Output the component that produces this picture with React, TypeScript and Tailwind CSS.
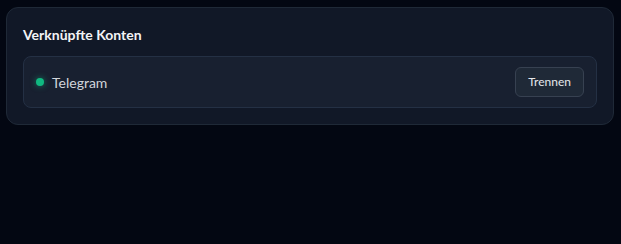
export default function App() {
  return (
    <div className="min-h-screen w-full bg-[#030712] pl-[6px] pr-[7px] pt-[7px]" style={{ fontFamily: 'Lato, "Noto Sans", sans-serif' }}>
      <div className="rounded-xl border border-[#1f2937] bg-[#111827] px-4 pt-[17px] pb-4">
        <h3 className="text-[14px] font-bold leading-5 text-[#f3f4f6]">Verknüpfte Konten</h3>
        <div className="mt-[11px] flex items-center justify-between rounded-lg border border-[#243044] bg-[#182030] pl-3 pr-3 py-[10px]">
          <div className="flex items-center gap-2">
            <span className="h-2 w-2 rounded-full bg-[#10b981] shadow-[0_0_6px_rgba(16,185,129,0.6)]" />
            <span className="text-[14px] text-[#d1d5db]">Telegram</span>
          </div>
          <button className="h-[30px] rounded-md border border-[#374151] bg-[#1f2937] px-3 text-[12px] text-[#e5e7eb]">Trennen</button>
        </div>
      </div>
    </div>
  );
}
